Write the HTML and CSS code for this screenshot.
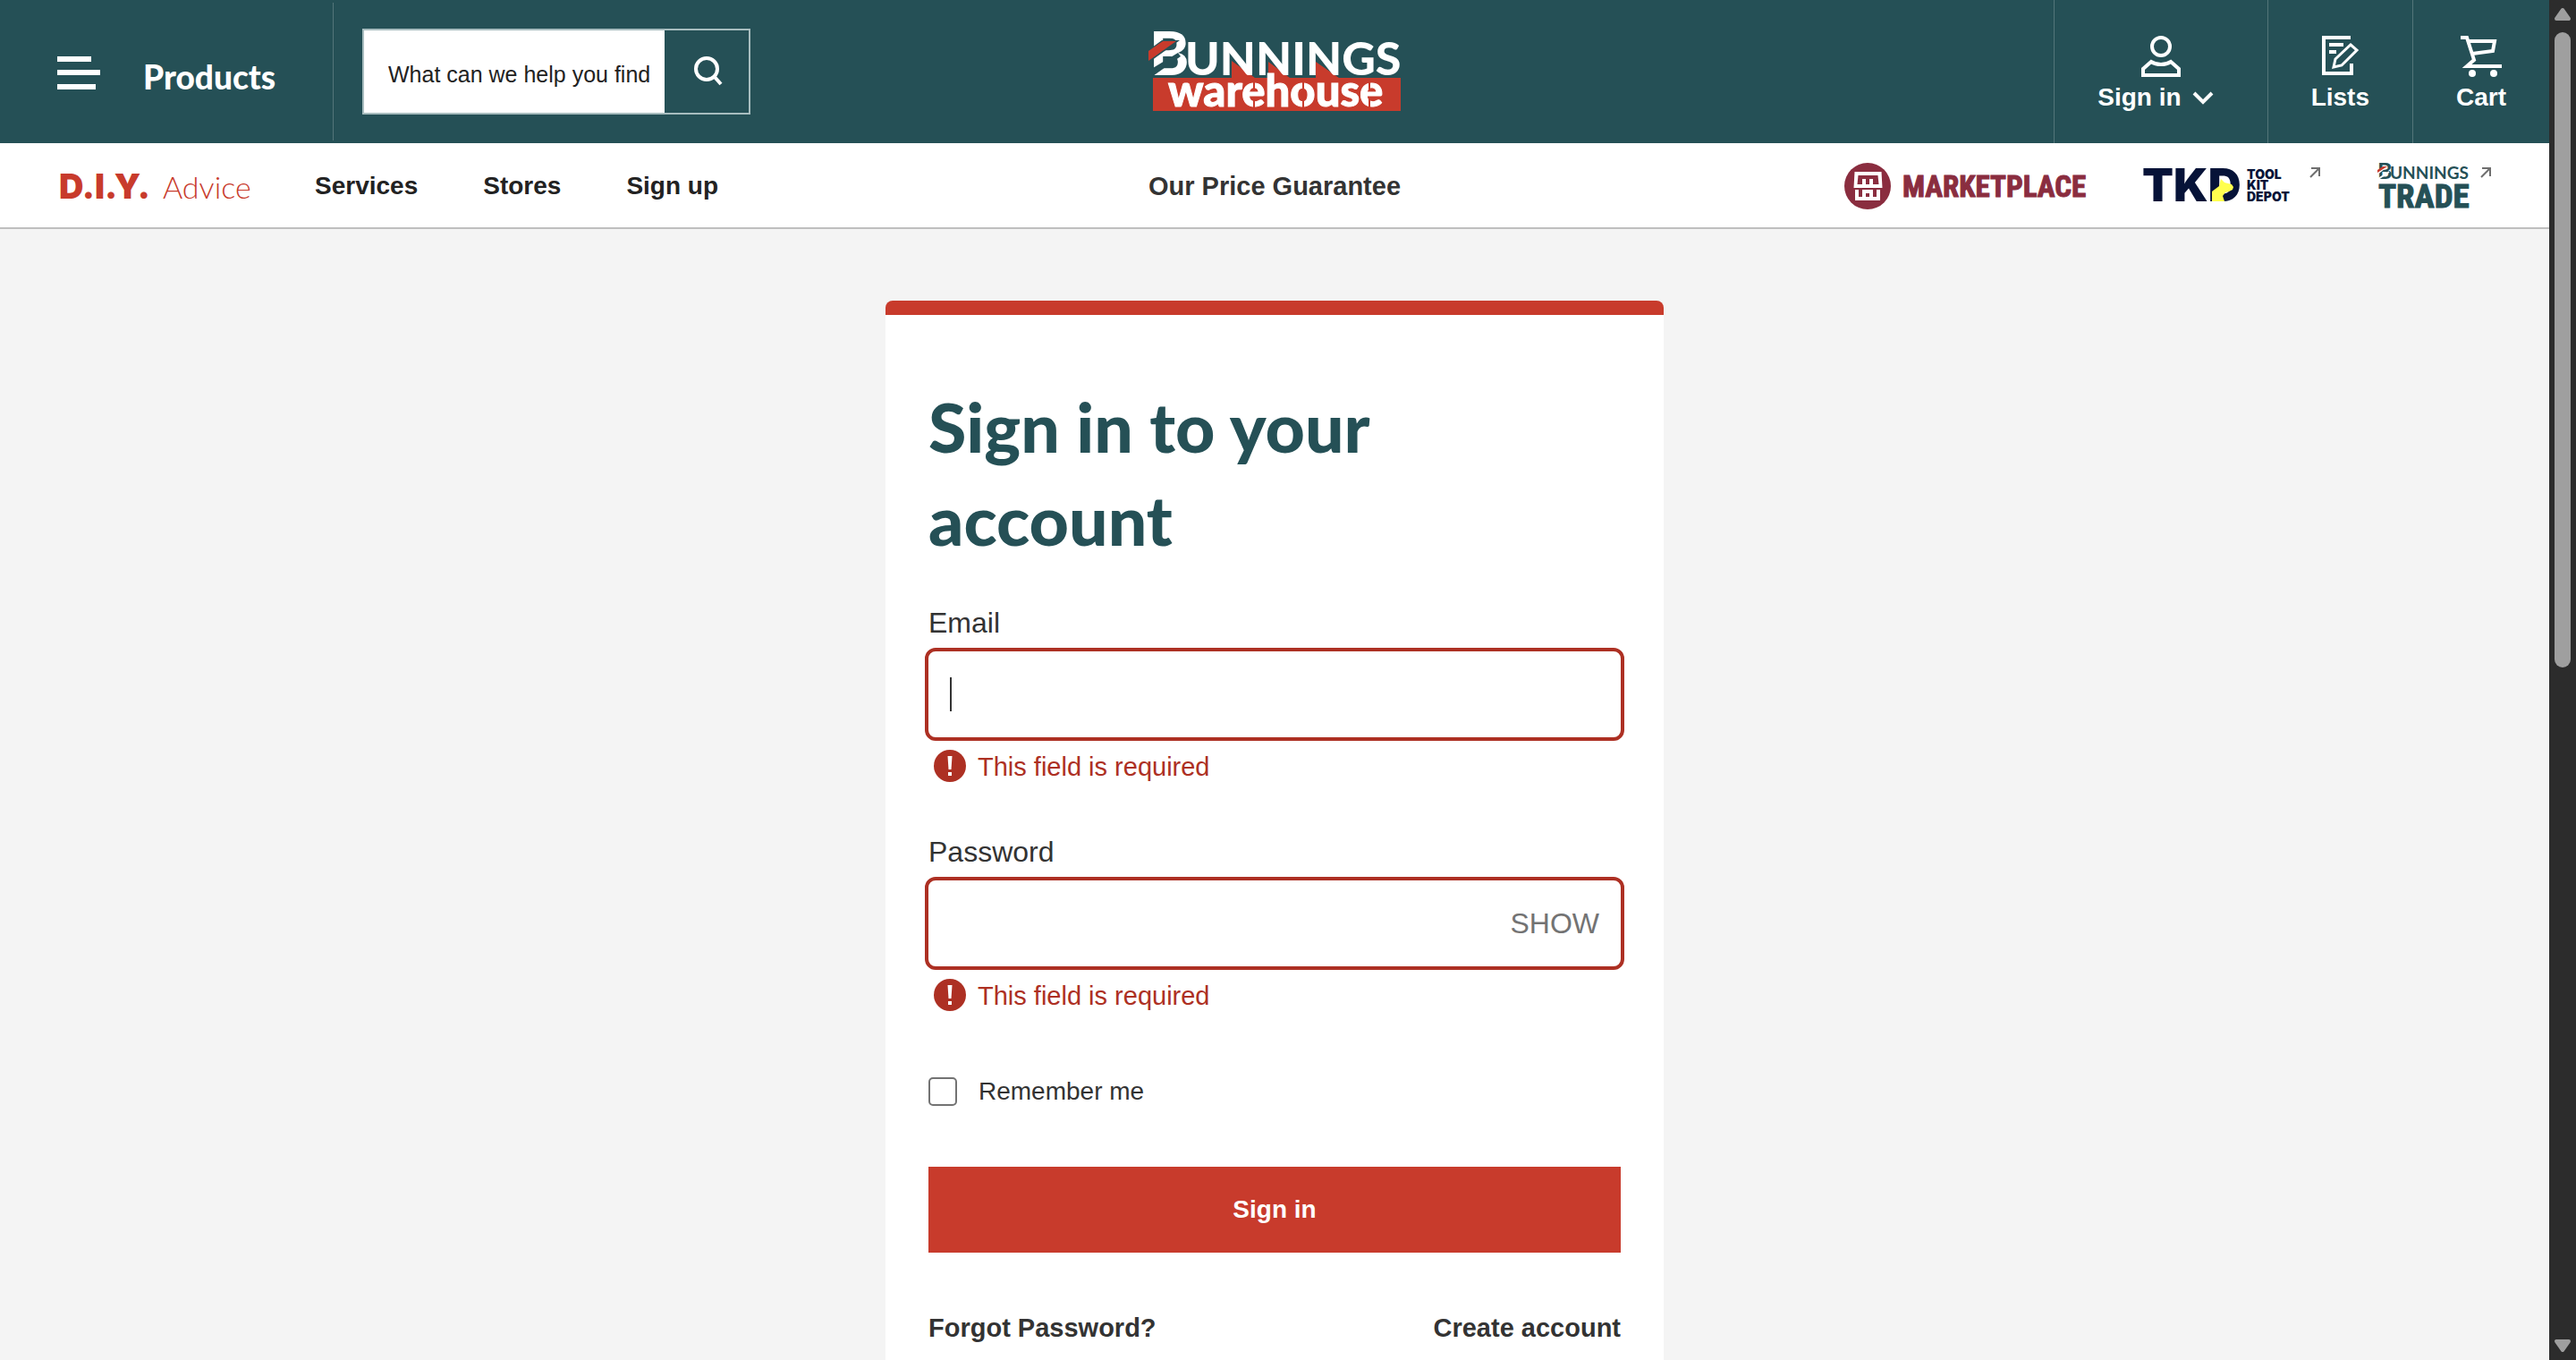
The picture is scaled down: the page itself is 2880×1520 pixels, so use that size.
FILE: index.html
```html
<!DOCTYPE html>
<html lang="en">
<head>
<meta charset="utf-8">
<title>Sign in - Bunnings Warehouse</title>
<link rel="stylesheet" href="styles.css">
</head>
<body>
<div class="page">
  <header class="header">
    <div class="header-left">
      <button class="menu" type="button">
        <svg width="48" height="38" viewBox="0 0 48 38" fill="#fff" aria-hidden="true"><path d="M0 0h38v6H0zM0 15h48v6H0zM0 31h43v6H0z"/></svg>
        <span>Products</span>
      </button>
      <form class="search" role="search">
        <input class="search-input" type="text" aria-label="Search" placeholder="What can we help you find">
        <button class="search-button" type="button" aria-label="Search">
          <svg width="36" height="36" viewBox="-2 1 36 36" fill="none" stroke="#fff" stroke-width="4"><circle cx="16" cy="16" r="12"/><path d="M24 24l8 9"/></svg>
        </button>
      </form>
    </div>
    <a class="logo" href="#" aria-label="Bunnings Warehouse">
      <svg width="282" height="88" viewBox="0 0 282 88">
        <path fill="#c83b2c" d="M5 51H93V32l26 19h15V33l24 18h29V33l26 18h69v37H5z"/>
        <text class="logo-text" x="1" y="48" font-size="67">B</text>
        <path fill="#255056" d="M0 20L15 9H35L0 34zM0 43L33 23l3 4L5 49z"/>
        <path fill="#c83b2c" d="M0 21L16 10H31L0 32z"/>
        <text class="logo-text" x="41" y="48" font-size="52">UNNINGS</text>
        <text class="logo-text heavy" x="22" y="83" font-size="49">warehouse</text>
        <path stroke="#c83b2c" stroke-width="2" d="M118 54v10m0 10v10M173 54v9m0 11v10M247 54v10m0 10v10"/>
      </svg>
    </a>
    <nav class="account" aria-label="Account">
      <button class="account-item" type="button">
        <svg width="48" height="48" viewBox="0 0 48 48" fill="none" stroke="#fff" stroke-width="4" aria-hidden="true"><circle cx="24" cy="14" r="10"/><path d="M13 31L4 39v7h40v-7l-9-8c-6 4-16 4-22 0z"/></svg>
        <span class="account-label">Sign in <svg width="36" height="18" viewBox="0 0 36 18" fill="none" stroke="#fff" stroke-width="4" aria-hidden="true"><path d="M2 4l10 10L22 4"/></svg></span>
      </button>
      <a class="account-item" href="#">
        <svg width="48" height="48" viewBox="0 0 48 48" fill="none" stroke="#fff" stroke-width="4" aria-hidden="true"><path d="M36 4H6v40h31V33M12 12h16M12 20h8"/><path stroke-width="3" d="M36 12l7 6-17 17-9 2 2-9z"/></svg>
        <span class="account-label">Lists</span>
      </a>
      <a class="account-item" href="#">
        <svg width="48" height="48" viewBox="0 0 48 48" fill="none" stroke="#fff" stroke-width="4" aria-hidden="true"><path d="M1 4h7l8 25-8 7h39M10 8h29l-2 11-23 3"/><g fill="#fff" stroke="none"><circle cx="14" cy="44" r="4"/><circle cx="38" cy="44" r="4"/></g></svg>
        <span class="account-label">Cart</span>
      </a>
    </nav>
  </header>

  <nav class="subnav" aria-label="Main">
    <div class="subnav-left">
      <a class="diy" href="#"><b>D.I.Y.</b> <span>Advice</span></a>
      <a href="#">Services</a>
      <a href="#">Stores</a>
      <a href="#">Sign up</a>
    </div>
    <a class="guarantee" href="#">Our Price Guarantee</a>
    <div class="subnav-right">
      <a href="#" aria-label="Marketplace">
        <svg width="270" height="52" viewBox="0 0 270 52">
          <circle cx="26" cy="26" r="26" fill="#8a2d3f"/>
          <path fill="#fff" fill-rule="evenodd" d="M11.500 10h30l1 18h-32zM15.500 14l-1 10h5.500v-6h4v6h4v-6h4v6h6.500l-1-10zM12 30h28v12H12zM16 30v8h4v-8zM32 30v8h4v-8zM24 34v4h4v-4z"/>
          <text class="condensed" x="65" y="38" font-size="33" fill="#8a2d3f" stroke="#8a2d3f">MARKETPLACE</text>
        </svg>
      </a>
      <a href="#" aria-label="Tool Kit Depot">
        <svg width="198" height="52" viewBox="0 0 198 52">
          <g class="tkd"><text x="-1" y="43" font-size="51">TKD</text>
          <text x="116" y="18" font-size="14">TOOL</text><text x="116" y="30" font-size="14">KIT</text><text x="116" y="43" font-size="14">DEPOT</text></g>
          <path fill="#ffff4f" d="M77 43V32l8-6 2-8 4 4 8 2 2 3-1 3-4 2-4 1-3 4 2 6z"/>
          <path class="external" d="M188 6h9v9M197 6l-10 10"/>
        </svg>
      </a>
      <a href="#" aria-label="Bunnings Trade">
        <svg width="128" height="52" viewBox="0 0 128 52">
          <text class="trade-name" x="0" y="18" font-size="25">B</text>
          <path stroke="#fff" stroke-width="2" d="M0 12L9 5M1 18l12-8"/>
          <path fill="#c83b2c" d="M0 8l6-4h5L0 11z"/>
          <text class="trade-name" x="14" y="18" font-size="19">UNNINGS</text>
          <text class="condensed" x="1" y="50" font-size="37" fill="#255056" stroke="#255056">TRADE</text>
          <path class="external" d="M117 6h9v9M126 6l-10 10"/>
        </svg>
      </a>
    </div>
  </nav>

  <main class="main">
    <form class="card" novalidate>
      <h1>Sign in to your account</h1>
      <label class="label" for="email">Email</label>
      <div class="field"><input id="email" type="email" aria-describedby="email-error"><span class="caret"></span></div>
      <p class="error" id="email-error"><svg width="36" height="36" viewBox="0 0 36 36" aria-hidden="true"><circle cx="18" cy="18" r="18" fill="#ad3023"/><path fill="#fff" d="M15.500 7h5l-1 15h-3zM16 25h4v4h-4z"/></svg>This field is required</p>
      <label class="label" for="password">Password</label>
      <div class="field"><input id="password" type="password" aria-describedby="password-error"><button class="show" type="button">SHOW</button></div>
      <p class="error" id="password-error"><svg width="36" height="36" viewBox="0 0 36 36" aria-hidden="true"><circle cx="18" cy="18" r="18" fill="#ad3023"/><path fill="#fff" d="M15.500 7h5l-1 15h-3zM16 25h4v4h-4z"/></svg>This field is required</p>
      <div class="remember"><input id="remember" type="checkbox"><label for="remember">Remember me</label></div>
      <button class="submit" type="button">Sign in</button>
      <div class="links"><a href="#">Forgot Password?</a><a href="#">Create account</a></div>
    </form>
  </main>
</div>
<div class="scrollbar" aria-hidden="true">
  <svg width="18" height="14" viewBox="0 0 18 14"><path d="M9 2l7 10H2z"/></svg>
  <div class="track"><div class="thumb"></div></div>
  <svg width="18" height="14" viewBox="0 0 18 14"><path d="M9 12L2 2h14z"/></svg>
</div>
</body>
</html>
```

FILE: styles.css
```css
* { box-sizing: border-box; }

body {
  margin: 0;
  display: flex;
  height: 100vh;
  overflow: hidden;
  background: #f4f4f4;
  color: #333;
  font-family: "Liberation Sans", Arial, sans-serif;
  font-size: 28px;
}

a { color: inherit; text-decoration: none; }
button, input { font: inherit; color: inherit; }
button { border: 0; background: none; padding: 0; }
svg { display: block; flex: none; overflow: visible; }

.page { flex: 1; min-width: 0; display: flex; flex-direction: column; }

/* Top bar */
.header {
  display: grid;
  grid-template-columns: 1fr auto 1fr;
  flex: none;
  height: 160px;
  background: #255056;
  color: #fff;
}
.header-left { display: flex; align-items: center; }
.menu {
  display: flex;
  align-items: center;
  gap: 48px;
  width: 373px;
  height: 154px;
  padding: 4px 0 0 64px;
  border-right: 1px solid #537579;
}
.menu span {
  padding-top: 8px;
  font: 900 37px/48px Lato, sans-serif;
}
.search {
  display: flex;
  width: 434px;
  height: 96px;
  margin-left: 32px;
  border: 2px solid #a8bdbf;
}
.search-input {
  flex: 1;
  min-width: 0;
  padding: 6px 0 0 27px;
  border: 0;
  border-radius: 0;
  outline: 0;
  background: #fff;
  font-size: 25px;
}
.search-input::placeholder { color: #222; opacity: 1; }
.search-button { display: grid; place-items: center; width: 94px; }
.logo { align-self: start; padding-top: 36px; }
.logo-text { font-family: Lato, sans-serif; font-weight: 900; fill: #fff; }
.heavy { stroke: #fff; stroke-width: 1; }

.account { display: flex; justify-content: flex-end; font-weight: bold; }
.account-item {
  display: flex;
  flex-direction: column;
  align-items: center;
  gap: 4px;
  padding: 38px 48px 0;
  border-left: 1px solid #537579;
}
.account-label { display: flex; align-items: center; gap: 12px; line-height: 38px; }

/* Second bar */
.subnav {
  display: grid;
  grid-template-columns: 1fr auto 1fr;
  align-items: center;
  flex: none;
  height: 96px;
  padding-top: 2px;
  border-bottom: 2px solid #bfbfbf;
  background: #fff;
  font-weight: bold;
}
.subnav-left { display: flex; align-items: center; gap: 73px; padding-left: 66px; color: #222; }
.diy {
  display: flex;
  align-items: baseline;
  gap: 14px;
  width: 213px;
  color: #c83b2c;
  font: 300 34px/44px Lato, sans-serif;
}
.diy b { font-family: Inter, sans-serif; font-size: 38px; font-weight: 900; }
.guarantee { font-size: 29px; }
.subnav-right { display: flex; justify-content: flex-end; gap: 64px; padding-right: 64px; }
.condensed { font-family: "Liberation Sans Narrow", "Roboto Condensed", "Open Sans Condensed", "DejaVu Sans Condensed", sans-serif; font-weight: bold; }
.tkd { font-family: Inter, sans-serif; font-weight: 900; fill: #061338; }
.trade-name { font-family: Lato, sans-serif; font-weight: 700; fill: #255056; }
.external { fill: none; stroke: #6f6f6f; stroke-width: 2; }

/* Sign-in card */
.main { flex: 1; display: flex; justify-content: center; padding-top: 80px; }
.card {
  width: 870px;
  min-height: 1240px;
  padding: 72px 48px;
  border-top: 16px solid #c83b2c;
  border-radius: 8px;
  background: #fff;
}
h1 {
  margin: 0 0 44px;
  color: #255056;
  font: 900 77px/104px Lato, sans-serif;
}
.label { display: block; margin-bottom: 8px; font-size: 32px; line-height: 40px; }
.field {
  position: relative;
  display: flex;
  align-items: center;
  height: 104px;
  margin: 0 -4px;
  padding: 0 24px;
  border: 4px solid #ad3023;
  border-radius: 12px;
}
.field input { flex: 1; min-width: 0; border: 0; outline: 0; background: none; font-size: 32px; }
.caret { position: absolute; left: 24px; top: 29px; width: 2px; height: 38px; background: #333; }
.show { color: #737373; font-size: 32px; }
.error {
  display: flex;
  gap: 13px;
  margin: 10px 0 58px 6px;
  color: #ad3023;
  font-size: 29px;
  line-height: 38px;
  height: 36px;
}
.remember { display: flex; align-items: center; gap: 24px; margin-top: 74px; line-height: 32px; }
.remember input {
  appearance: none;
  width: 32px;
  height: 32px;
  margin: 0;
  border: 2px solid #737373;
  border-radius: 5px;
  background: #fff;
}
.submit {
  display: block;
  width: 100%;
  height: 96px;
  margin: 68px 0 64px;
  background: #c83b2c;
  color: #fff;
  font-weight: bold;
}
.links { display: flex; justify-content: space-between; font-size: 29px; font-weight: bold; line-height: 40px; }

/* Window scroll bar */
.scrollbar {
  display: flex;
  flex-direction: column;
  align-items: center;
  flex: none;
  gap: 13px;
  width: 30px;
  padding: 9px 0;
  background: #2c2c2c;
}
.scrollbar path { fill: #9f9f9f; stroke: #9f9f9f; stroke-width: 4; stroke-linejoin: round; }
.track { flex: 1; width: 18px; }
.thumb { height: 49%; border-radius: 9px; background: #9f9f9f; }
```
